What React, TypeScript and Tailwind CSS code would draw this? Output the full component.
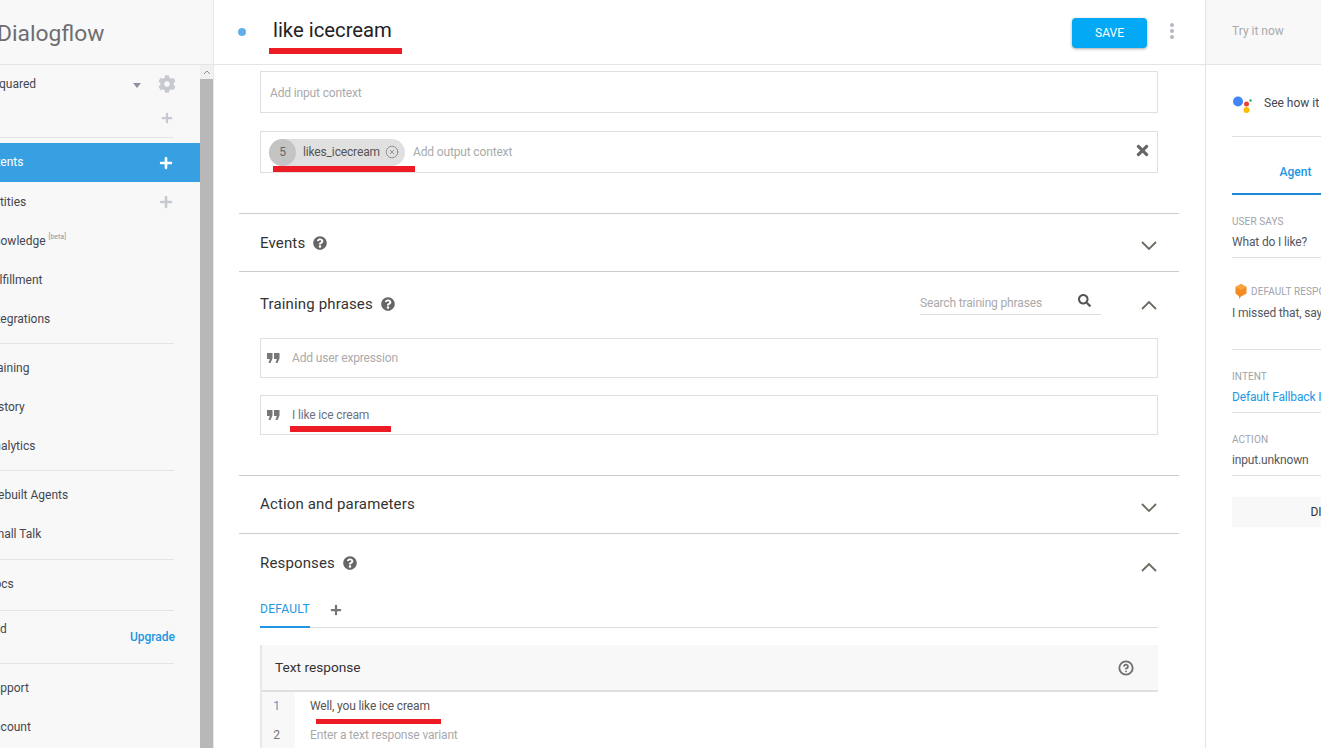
import { FaCog, FaPlus, FaQuestionCircle, FaSearch, FaTimes } from "react-icons/fa";
import { CircleHelp, CircleX } from "lucide-react";

function RedMark({ className }: { className: string }) {
  return <div className={`absolute bg-[#ed1c24] ${className}`} />;
}

function Divider() {
  return <div className="h-px w-[174px] bg-[#e4e4e4]" />;
}

function NavItem({ label, plus }: { label: string; plus?: boolean }) {
  return (
    <div className="flex h-[39px] w-[200px] items-center justify-between">
      <span className="-ml-[13.5px] whitespace-nowrap text-xs text-[#44474f]">{label}</span>
      {plus && <FaPlus className="mr-[27px] h-3.5 w-3.5 text-[#c6c9d0]" />}
    </div>
  );
}

function Sidebar() {
  return (
    <aside className="flex h-full w-[214px] shrink-0 flex-col overflow-hidden border-r border-[#e8e8e8] bg-[#f8f8f8]">
      <div className="flex h-[65px] shrink-0 items-center border-b border-[#e4e4e4]">
        <span className="-ml-[3px] mt-1 text-[22.8px] text-[#6d6e70]">Dialogflow</span>
      </div>
      <div className="flex min-h-0 flex-1">
        <div className="w-[200px] shrink-0">
          <div className="flex h-[38px] items-center justify-between">
            <span className="-ml-px text-xs text-[#44474f]">quared</span>
            <div className="mr-6 flex items-center gap-[17px]">
              <div className="mt-0.5 h-0 w-0 border-x-4 border-t-[5px] border-x-transparent border-t-[#8f93a0]" />
              <FaCog className="h-[18px] w-[18px] text-[#c6c9d0]" />
            </div>
          </div>
          <div className="flex h-[34px] items-center justify-end pb-1 pr-[27px]">
            <FaPlus className="h-3 w-3 text-[#c6c9d0]" />
          </div>
          <Divider />
          <div className="mt-[5px] flex h-[39px] items-center justify-between bg-[#37a0e2]">
            <span className="-ml-[13.5px] -mt-0.5 text-xs text-white">Intents</span>
            <FaPlus className="mr-[27px] h-3.5 w-3.5 text-white" />
          </div>
          <NavItem label="Entities" plus />
          <div className="flex h-[39px] items-center">
            <span className="-ml-[13.5px] text-xs text-[#44474f]">Knowledge</span>
            <span className="mb-1.5 ml-[3px] text-[7px] text-[#8f93a0]">[beta]</span>
          </div>
          <NavItem label="Fulfillment" />
          <NavItem label="Integrations" />
          <div className="mt-[5px]">
            <Divider />
          </div>
          <div className="mt-1">
            <NavItem label="Training" />
            <NavItem label="History" />
            <NavItem label="Analytics" />
          </div>
          <div className="mt-[5px]">
            <Divider />
          </div>
          <div className="mt-1">
            <NavItem label="Prebuilt Agents" />
            <NavItem label="Small Talk" />
          </div>
          <div className="mt-1.5">
            <Divider />
          </div>
          <div className="mt-1">
            <NavItem label="Docs" />
          </div>
          <div className="mt-[7px]">
            <Divider />
          </div>
          <div className="flex h-[52px] items-start justify-between pr-[25px]">
            <span className="mt-2.5 text-xs text-[#44474f]">d</span>
            <span className="mt-[18px] text-xs font-medium text-[#2196e3]">Upgrade</span>
          </div>
          <Divider />
          <div className="mt-1">
            <NavItem label="Support" />
            <NavItem label="Account" />
          </div>
        </div>
        <div className="flex w-[13px] flex-col bg-[#b8b8b8]">
          <div className="flex h-[14px] items-center justify-center bg-[#f1f1f1]">
            <svg viewBox="0 0 8 5" className="h-[5px] w-2 text-[#8f8f8f]" fill="none" stroke="currentColor">
              <path d="M1 4l3-3 3 3" />
            </svg>
          </div>
        </div>
      </div>
    </aside>
  );
}

function Chevron({ up, className = "" }: { up?: boolean; className?: string }) {
  return (
    <svg viewBox="0 0 16 10" className={`h-2.5 w-4 text-[#6b6b60] ${className}`} fill="none" stroke="currentColor" strokeWidth="1.8">
      <path d={up ? "M1 9l7-7 7 7" : "M1 1l7 7 7-7"} />
    </svg>
  );
}

function Help() {
  return <FaQuestionCircle className="h-3.5 w-3.5 text-[#666]" />;
}

function QuoteMark() {
  return (
    <svg viewBox="0 0 13 10" className="h-2.5 w-[13px] text-[#777]" fill="currentColor">
      <path d="M0 0h5.5v5.5L3.5 10H1.5L2.8 6H0z" />
      <path d="M7 0h5.5v5.5l-2 4.5h-2L9.8 6H7z" />
    </svg>
  );
}

function Phrase({ text, placeholder }: { text: string; placeholder?: boolean }) {
  return (
    <div className="flex h-10 items-center border border-[#e0e0e0] pl-[6px]">
      <QuoteMark />
      <span className={`ml-3 text-xs tracking-[-0.15px] ${placeholder ? "text-[#aaa]" : "text-[#6d7280]"}`}>{text}</span>
    </div>
  );
}

function SectionTitle({ text, className = "" }: { text: string; className?: string }) {
  return <h2 className={`text-[15px] tracking-[0.15px] text-[#333] ${className}`}>{text}</h2>;
}

function Main() {
  return (
    <main className="flex h-full w-[991px] shrink-0 flex-col overflow-hidden">
      <header className="relative flex h-[65px] shrink-0 items-center border-b border-[#e4e4e4] pl-6 pr-[31px]">
        <div className="h-2 w-2 rounded-full bg-[#62aee8]" />
        <h1 className="-mt-1 ml-[27px] flex-1 text-[20.3px] text-[#222]">like icecream</h1>
        <RedMark className="left-[55px] top-12 h-1.5 w-[133px]" />
        <button className="mt-0.5 flex h-[30px] w-[75px] items-center justify-center rounded-sm bg-[#03a9f4] text-xs text-white shadow-[0_1px_3px_rgba(0,0,0,0.35)]">
          SAVE
        </button>
        <div className="-mt-0.5 ml-[23px] flex flex-col gap-[2px]">
          <div className="h-1 w-1 rounded-full bg-[#b5b8c0]" />
          <div className="h-1 w-1 rounded-full bg-[#b5b8c0]" />
          <div className="h-1 w-1 rounded-full bg-[#b5b8c0]" />
        </div>
      </header>

      <div className="pl-[25px] pr-[26px]">
        <div className="px-[21px] pt-1.5">
          <div className="flex h-[42px] items-center border border-[#e0e0e0] pl-[9px] pt-px text-xs tracking-[-0.15px] text-[#aaa]">
            Add input context
          </div>
          <div className="relative mt-[18px] flex h-[42px] items-center border border-[#e0e0e0] pl-2 pr-1.5">
            <div className="flex h-[27px] w-[136px] items-center rounded-full bg-[#e0e0e0]">
              <div className="flex h-[27px] w-[27px] items-center justify-center rounded-full bg-[#c4c4c4] text-xs text-[#666]">
                5
              </div>
              <span className="ml-[7px] text-xs tracking-[-0.15px] text-[#555]">likes_icecream</span>
              <CircleX className="ml-[5px] h-3.5 w-3.5 text-[#777]" strokeWidth={1.25} />
            </div>
            <span className="ml-2 flex-1 text-xs tracking-[-0.15px] text-[#aaa]">Add output context</span>
            <FaTimes className="-mt-1 h-[17px] w-[17px] text-[#666]" />
            <RedMark className="left-3 top-[34px] h-1.5 w-[142px]" />
          </div>
        </div>

        <section className="mt-10 flex h-[58px] items-center justify-between border-t border-[#ccc] pl-[21px] pr-[22px]">
          <div className="flex items-center gap-2">
            <SectionTitle text="Events" className="mt-0.5" />
            <Help />
          </div>
          <Chevron className="mt-[7px]" />
        </section>

        <section className="h-[204px] border-t border-[#ccc] px-[21px]">
          <div className="flex h-[66px] items-center justify-between pb-0.5">
            <div className="flex items-center gap-2">
              <SectionTitle text="Training phrases" />
              <Help />
            </div>
            <div className="flex items-center pr-px">
              <div className="mb-0.5 mr-10 flex h-6 w-[181px] items-center justify-between border-b border-[#ddd] pr-[10px] text-xs tracking-[-0.15px] text-[#aaa]">
                Search training phrases
                <FaSearch className="-mt-1 h-[13px] w-[13px] text-[#555]" />
              </div>
              <Chevron up className="mt-0.5" />
            </div>
          </div>
          <Phrase text="Add user expression" placeholder />
          <div className="relative mt-[17px]">
            <Phrase text="I like ice cream" />
            <RedMark className="left-[30px] top-[31px] h-1.5 w-[101px]" />
          </div>
        </section>

        <section className="flex h-[58px] items-center justify-between border-t border-[#ccc] pl-[21px] pr-[22px]">
          <SectionTitle text="Action and parameters" />
          <Chevron className="mt-[7px]" />
        </section>

        <section className="border-t border-[#ccc] px-[21px]">
          <div className="flex h-[59px] items-center justify-between pb-0.5 pr-px">
            <div className="flex items-center gap-2">
              <SectionTitle text="Responses" className="mt-0.5" />
              <Help />
            </div>
            <Chevron up className="mt-2" />
          </div>
          <div className="flex h-[35px] items-center border-b border-[#ddd]">
            <div className="flex h-[35px] w-[50px] items-center border-b-2 border-[#2196e3] text-xs tracking-[0.3px] text-[#2196e3]">
              DEFAULT
            </div>
            <FaPlus className="ml-5 h-3 w-3 text-[#777]" />
          </div>
          <div className="mt-[17px] border-l-2 border-[#e8e8e8]">
            <div className="flex h-[47px] items-center justify-between border-b-2 border-[#e0e0e0] bg-[#f8f8f8] pl-[13px] pr-[24px]">
              <span className="text-[13.7px] text-[#333]">Text response</span>
              <CircleHelp className="h-4 w-4 text-[#707070]" strokeWidth={2.75} />
            </div>
            <div className="relative flex">
              <div className="w-[33px] bg-[#f8f8f8] text-center text-xs text-[#777]">
                <div className="flex h-[28px] items-center justify-center pr-1 text-[#5e93bd]">1</div>
                <div className="flex h-[29px] items-center justify-center pr-1">2</div>
              </div>
              <div className="pl-[15px] text-xs tracking-[-0.15px]">
                <div className="flex h-[28px] items-center text-[#555]">Well, you like ice cream</div>
                <div className="flex h-[30px] items-center text-[#aaa]">Enter a text response variant</div>
              </div>
              <RedMark className="left-[54px] top-[27px] h-[5px] w-[125px]" />
            </div>
          </div>
        </section>
      </div>
    </main>
  );
}

function Field({ label, value, blue }: { label: string; value: string; blue?: boolean }) {
  return (
    <div className="flex h-[63px] flex-col justify-end border-b border-[#e0e0e0] pb-[7px]">
      <div className="text-[10px] leading-[14px] tracking-[0.1px] text-[#a0a3ad]">{label}</div>
      <div className={`mt-1.5 whitespace-nowrap text-xs leading-[15px] tracking-[-0.15px] ${blue ? "text-[#2196e3]" : "text-[#55585f]"}`}>
        {value}
      </div>
    </div>
  );
}

function TryPanel() {
  return (
    <aside className="h-full flex-1 overflow-hidden border-l border-[#e4e4e4]">
      <div className="flex h-[65px] w-[320px] items-center border-b border-[#e4e4e4] bg-[#f8f8f8] pb-0.5 pl-[26px] text-xs text-[#aaa]">
        Try it now
      </div>
      <div className="ml-[26px] w-[256px]">
        <div className="flex h-[72px] items-center border-b border-[#e0e0e0] pt-[5px]">
          <svg viewBox="0 0 22 18" className="mt-1 h-[18px] w-[22px]">
            <circle cx="6" cy="5.5" r="5" fill="#4285f4" />
            <circle cx="14.5" cy="8" r="2.5" fill="#ea4335" />
            <circle cx="14.5" cy="14" r="3" fill="#fbbc05" />
            <circle cx="18.5" cy="4.5" r="1.2" fill="#34a853" />
          </svg>
          <span className="ml-2.5 whitespace-nowrap text-xs text-[#44474f]">See how it works in Google Assistant.</span>
        </div>
        <div className="flex h-[58px]">
          <div className="flex w-[127px] items-center justify-center border-b-2 border-[#1e88d8] pt-[13px] text-xs font-medium text-[#2196e3]">
            Agent
          </div>
          <div className="flex w-[129px] items-center justify-center pt-[13px] text-xs text-[#888]">Domains</div>
        </div>
        <Field label="USER SAYS" value="What do I like?" />
        <div className="flex h-[92px] flex-col border-b border-[#e0e0e0] pt-[26px]">
          <div className="flex items-center gap-1 pl-[3px]">
            <svg viewBox="0 0 12 15" className="h-[15px] w-3">
              <path d="M6 0l5.5 3v6.5L6 12.5 4 15v-2.8L.5 9.5V3z" fill="#f58b1f" />
              <path d="M.5 3L6 6l5.5-3L6 0z" fill="#f9a63e" />
            </svg>
            <span className="whitespace-nowrap text-[10px] tracking-[0.1px] text-[#a0a3ad]">DEFAULT RESPONSE</span>
          </div>
          <div className="mt-1.5 whitespace-nowrap text-xs tracking-[-0.15px] text-[#55585f]">I missed that, say that again?</div>
        </div>
        <Field label="INTENT" value="Default Fallback Intent" blue />
        <Field label="ACTION" value="input.unknown" />
        <button className="mt-[21px] flex h-[30px] w-full items-center justify-center bg-[#f8f8f8] text-xs text-[#333]">
          DIAGNOSTIC INFO
        </button>
      </div>
    </aside>
  );
}

export default function App() {
  return (
    <div className="flex h-screen w-screen overflow-hidden bg-white font-['Roboto',sans-serif]">
      <Sidebar />
      <Main />
      <TryPanel />
    </div>
  );
}
